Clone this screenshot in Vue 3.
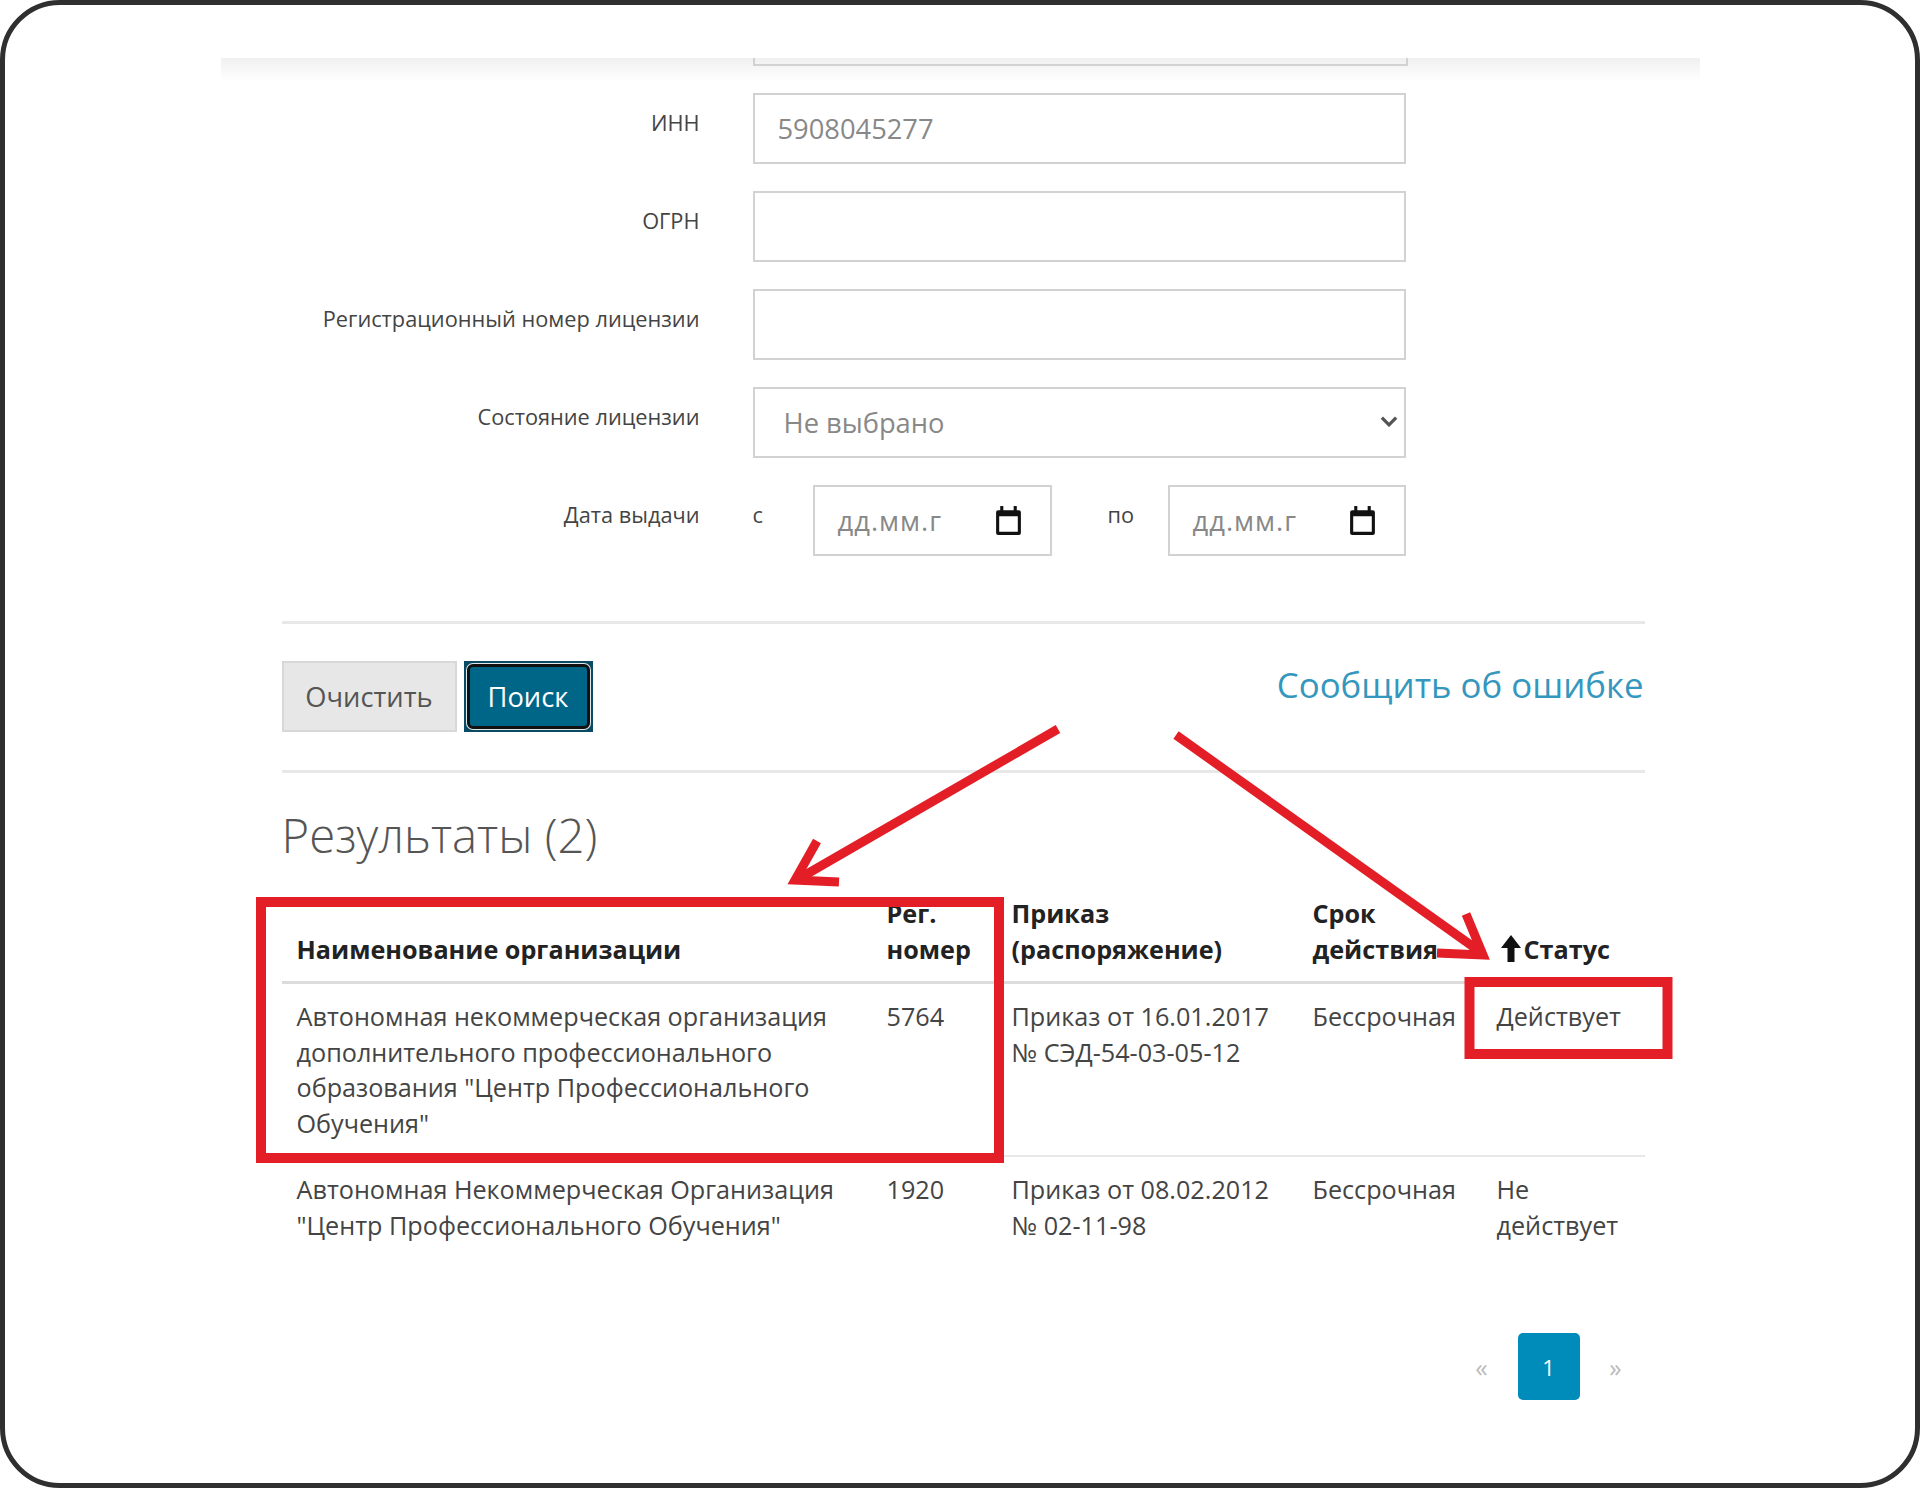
<template>
  <div class="frame">
    <div class="panel">
      <div class="panel-head">
        <div class="cut-input"></div>
      </div>

      <div class="form">
        <div class="form-row" v-for="f in textFields" :key="f.label">
          <label>{{ f.label }}</label>
          <input class="field" type="text" :value="f.value" readonly />
        </div>

        <div class="form-row">
          <label>Состояние лицензии</label>
          <div class="select-wrap">
            <select class="field select">
              <option>Не выбрано</option>
            </select>
            <svg class="chevron" viewBox="0 0 16 10">
              <path d="M1.5 1.5 8 8l6.500-6.500" fill="none" stroke="#555" stroke-width="3" />
            </svg>
          </div>
        </div>

        <div class="form-row">
          <label>Дата выдачи</label>
          <div class="dates">
            <span class="from">с</span>
            <div class="date-box">
              <span>дд.мм.г</span>
              <svg class="cal" viewBox="0 0 26 30">
                <path d="M3 5h20a2 2 0 0 1 2 2v20a2 2 0 0 1-2 2H3a2 2 0 0 1-2-2V7a2 2 0 0 1 2-2z M4 11v15h18V11z" fill="#111" fill-rule="evenodd" />
                <rect x="5" y="1" width="3" height="6" fill="#111" />
                <rect x="18" y="1" width="3" height="6" fill="#111" />
              </svg>
            </div>
            <span class="to">по</span>
            <div class="date-box">
              <span>дд.мм.г</span>
              <svg class="cal" viewBox="0 0 26 30">
                <path d="M3 5h20a2 2 0 0 1 2 2v20a2 2 0 0 1-2 2H3a2 2 0 0 1-2-2V7a2 2 0 0 1 2-2z M4 11v15h18V11z" fill="#111" fill-rule="evenodd" />
                <rect x="5" y="1" width="3" height="6" fill="#111" />
                <rect x="18" y="1" width="3" height="6" fill="#111" />
              </svg>
            </div>
          </div>
        </div>
      </div>

      <div class="rule first"></div>

      <div class="actions">
        <div class="btns">
          <button class="btn-clear">Очистить</button>
          <div class="search-wrap"><button class="btn-search">Поиск</button></div>
        </div>
        <a class="report">Сообщить об ошибке</a>
      </div>

      <div class="rule"></div>

      <h2>Результаты (2)</h2>

      <table>
        <colgroup>
          <col style="width: 590px" />
          <col style="width: 125px" />
          <col style="width: 301px" />
          <col style="width: 184px" />
          <col />
        </colgroup>
        <thead>
          <tr>
            <th>Наименование организации</th>
            <th>Рег.<br />номер</th>
            <th>Приказ<br />(распоряжение)</th>
            <th>Срок<br />действия</th>
            <th>
              <span class="sorted">
                <svg viewBox="0 0 20 27"><path d="M10 0 20 13h-6.500v14h-7V13H0z" fill="#111" /></svg>Статус
              </span>
            </th>
          </tr>
        </thead>
        <tbody>
          <tr v-for="r in rows" :key="r.num">
            <td>{{ r.name }}</td>
            <td>{{ r.num }}</td>
            <td>{{ r.order }}<br />{{ r.orderNo }}</td>
            <td>{{ r.term }}</td>
            <td>{{ r.status }}</td>
          </tr>
        </tbody>
      </table>

      <div class="pager">
        <span class="arrow">«</span>
        <span class="page">1</span>
        <span class="arrow">»</span>
      </div>
    </div>

    <!-- red marks drawn on top of the screenshot -->
    <svg class="marks" viewBox="0 0 1920 1488">
      <g fill="none" stroke="#e31e26">
        <rect x="261" y="902" width="738" height="256" stroke-width="10" />
        <rect x="1469.500" y="982" width="198" height="72" stroke-width="10" />
        <path d="M1058 729 800 878" stroke-width="9" />
        <path d="M817 841 795 880 839 882" stroke-width="9" />
        <path d="M1176 735 1482 953" stroke-width="9" />
        <path d="M1466 914 1483 955 1437 953" stroke-width="9" />
      </g>
    </svg>
  </div>
</template>

<script setup>
const textFields = [
  { label: 'ИНН', value: '5908045277' },
  { label: 'ОГРН', value: '' },
  { label: 'Регистрационный номер лицензии', value: '' },
]

const rows = [
  {
    name: 'Автономная некоммерческая организация дополнительного профессионального образования "Центр Профессионального Обучения"',
    num: '5764',
    order: 'Приказ от 16.01.2017',
    orderNo: '№ СЭД-54-03-05-12',
    term: 'Бессрочная',
    status: 'Действует',
  },
  {
    name: 'Автономная Некоммерческая Организация "Центр Профессионального Обучения"',
    num: '1920',
    order: 'Приказ от 08.02.2012',
    orderNo: '№ 02-11-98',
    term: 'Бессрочная',
    status: 'Не действует',
  },
]
</script>

<style>
body {
  background: #fff;
}
</style>

<style scoped>
.frame {
  position: relative;
  box-sizing: border-box;
  height: 1488px;
  border: 5px solid #2f2f2f;
  border-radius: 60px;
  padding-top: 53px;
  overflow: hidden;
  background: #fff;
  font-family: 'Open Sans', 'Liberation Sans', sans-serif;
  color: #444;
}

.panel {
  width: 1479px;
  margin: 0 auto;
  box-sizing: border-box;
  padding: 0 55px 0 61px;
}

.panel-head {
  height: 35px;
  margin: 0 -55px 0 -61px;
  padding-left: 532px;
  background: linear-gradient(#f0f0f0, #fff 65%);
}

.cut-input {
  width: 651px;
  height: 6px;
  border: 2px solid #d2d2d2;
  border-top: 0;
}

.form-row {
  display: grid;
  grid-template-columns: 418px 653px;
  column-gap: 53px;
  height: 71px;
  margin-bottom: 27px;
}

.form-row label {
  text-align: right;
  font-size: 21.750px;
  line-height: 30px;
  padding-top: 15px;
  color: #444;
}

.field {
  box-sizing: border-box;
  width: 100%;
  height: 71px;
  border: 2px solid #d2d2d2;
  background: #fff;
  padding: 0 23px;
  font: 27.300px 'Open Sans', 'Liberation Sans', sans-serif;
  color: #888;
  outline: none;
}

.select-wrap {
  position: relative;
}

.select {
  appearance: none;
  padding-left: 29px;
}

.chevron {
  position: absolute;
  right: 8px;
  top: 29px;
  width: 18px;
  height: 11px;
}

.dates {
  display: grid;
  grid-template-columns: 60px 239px 116px 238px;
}

.from,
.to {
  font-size: 21.750px;
  line-height: 30px;
  padding-top: 15px;
}

.to {
  padding-left: 56px;
}

.date-box {
  box-sizing: border-box;
  height: 71px;
  border: 2px solid #d2d2d2;
  padding: 0 28px 0 23px;
  display: flex;
  align-items: center;
  justify-content: space-between;
  font-size: 27.300px;
  color: #888;
  letter-spacing: 1px;
}

.cal {
  width: 27px;
  height: 31px;
}

.rule {
  height: 3px;
  background: #e8e8e8;
}

.rule.first {
  margin-top: 65px;
}

.actions {
  display: flex;
  justify-content: space-between;
  align-items: flex-start;
  padding-top: 37px;
  padding-bottom: 38px;
}

.btns {
  display: flex;
  gap: 7px;
}

.btn-clear {
  box-sizing: border-box;
  width: 175px;
  height: 71px;
  background: #e7e7e7;
  border: 2px solid #d8d8d8;
  font: 27.300px 'Open Sans', 'Liberation Sans', sans-serif;
  color: #555;
}

.search-wrap {
  box-sizing: border-box;
  width: 129px;
  height: 71px;
  padding: 3px;
  background: #0b4a63;
}

.btn-search {
  box-sizing: border-box;
  width: 100%;
  height: 100%;
  padding: 0;
  background: #006687;
  border: 3px solid #111;
  border-radius: 6px;
  box-shadow: 0 0 0 1px #dfe8ea;
  font: 27.300px 'Open Sans', 'Liberation Sans', sans-serif;
  color: #fff;
}

.report {
  font-size: 34.800px;
  line-height: 48px;
  color: #3597bd;
  margin-right: 1px;
}

h2 {
  margin: 34px 0 33px;
  font-size: 47.300px;
  line-height: 56px;
  font-weight: 300;
  color: #555;
}

table {
  width: 100%;
  table-layout: fixed;
  border-collapse: collapse;
  font-size: 25.200px;
  line-height: 35.500px;
}

th {
  text-align: left;
  vertical-align: bottom;
  padding: 0 0 14px 15px;
  font-weight: 700;
  color: #222;
  border-bottom: 3px solid #dcdcdc;
}

td {
  vertical-align: top;
  padding: 15px 0 14px 15px;
  border-bottom: 2px solid #e8e8e8;
}

tbody tr:last-child td {
  border-bottom: 0;
}

.sorted {
  margin-left: 4px;
  white-space: nowrap;
}

.sorted svg {
  width: 20px;
  height: 27px;
  margin-right: 3px;
  vertical-align: -3px;
}

.pager {
  display: flex;
  justify-content: flex-end;
  gap: 5px;
  margin-top: 76px;
  margin-right: -2px;
}

.pager span {
  width: 62px;
  height: 67px;
  display: flex;
  align-items: center;
  justify-content: center;
}

.arrow {
  font-size: 25px;
  color: #bbb;
}

.page {
  background: #008cba;
  border-radius: 5px;
  color: #fff;
  font-size: 22px;
}

.marks {
  position: absolute;
  left: -5px;
  top: -5px;
  width: 1920px;
  height: 1488px;
  pointer-events: none;
}
</style>
